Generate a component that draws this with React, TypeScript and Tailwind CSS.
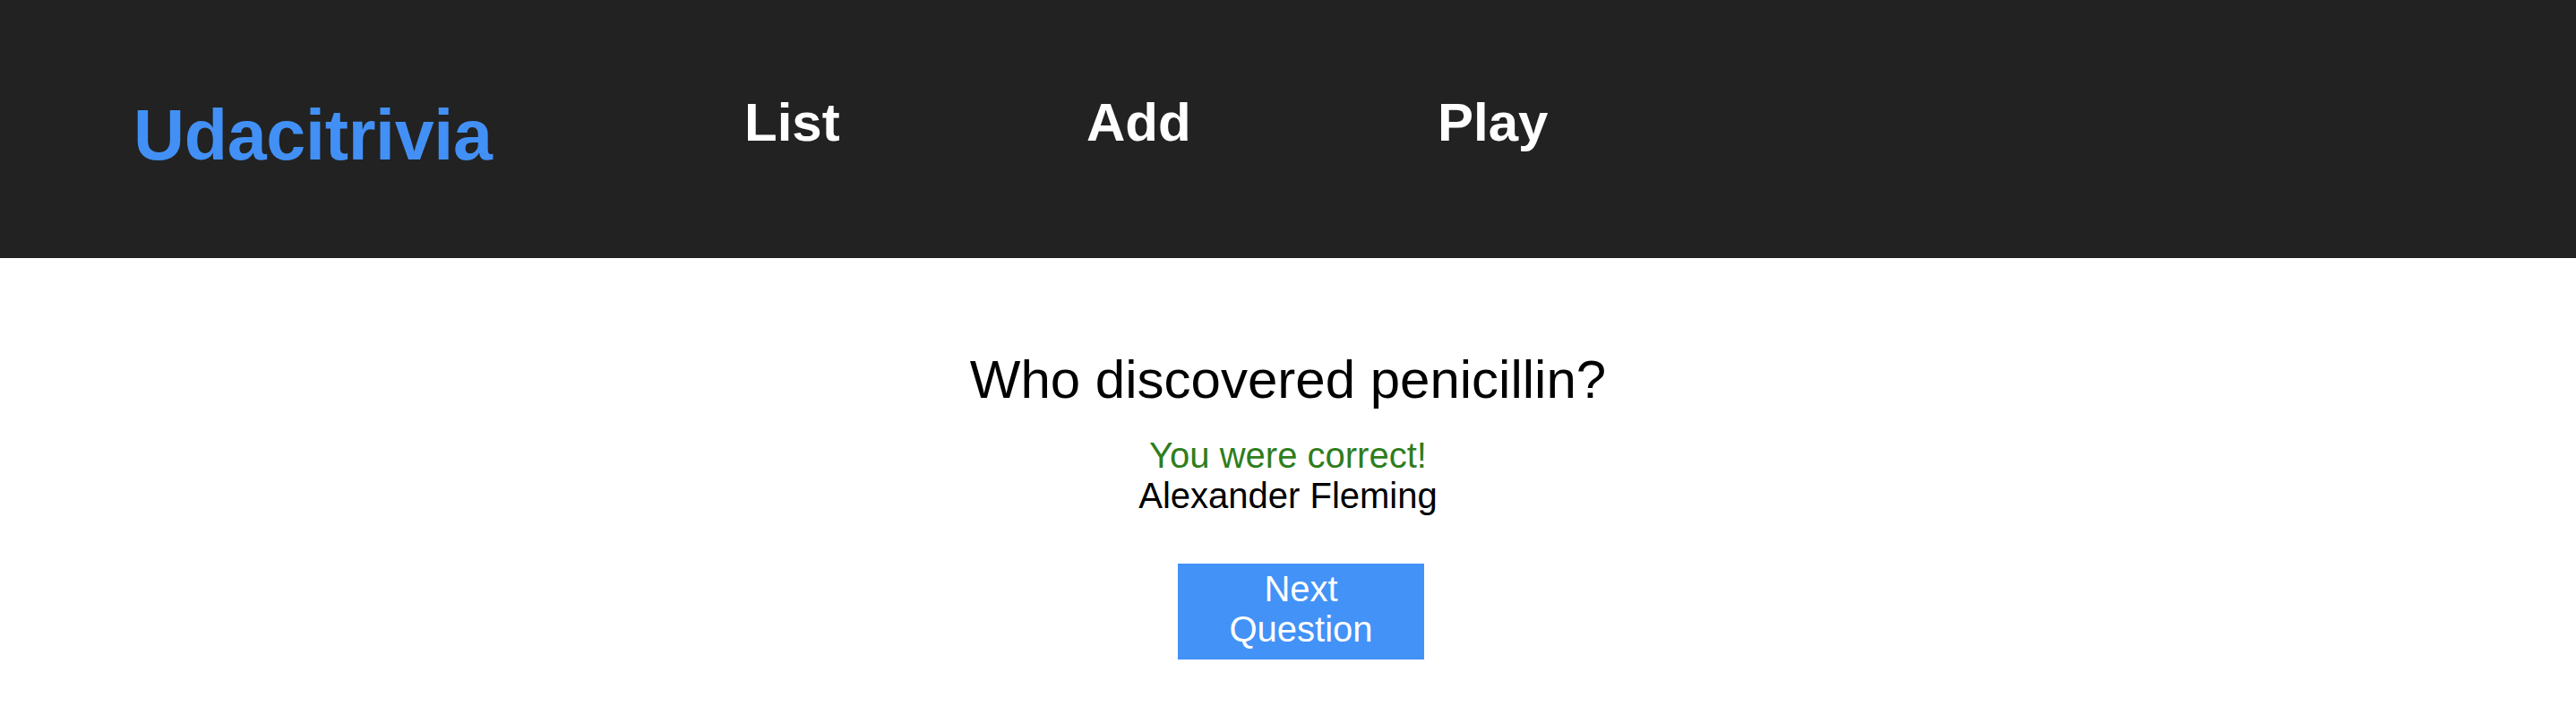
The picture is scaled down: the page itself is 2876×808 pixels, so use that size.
import React from "react";

export default function App() {
  return (
    <div className="min-h-screen bg-white" style={{ fontFamily: '"Liberation Sans", Arial, Helvetica, sans-serif' }}>
      <header className="flex h-[288px] items-start bg-[#222222]">
        <h1 className="ml-[149px] mt-[105px] w-[682px] shrink-0 text-[79px] font-bold leading-[normal] tracking-[-0.3px] text-[#4290f5]">
          Udacitrivia
        </h1>
        <nav className="mt-[102px] flex text-[60px] font-bold leading-[normal] text-white">
          <span className="w-[382px]">List</span>
          <span className="w-[392px]">Add</span>
          <span>Play</span>
        </nav>
      </header>
      <main className="flex flex-col items-center pt-[101px]">
        <h2 className="text-[60px] font-normal leading-[normal] text-black">Who discovered penicillin?</h2>
        <div className="mt-[28px] text-[40px] leading-[normal] text-[#2f7d1c]">You were correct!</div>
        <div className="text-[40px] leading-[normal] text-black">Alexander Fleming</div>
        <button className="ml-[29px] mt-[53px] h-[107px] w-[275px] bg-[#4392f7] px-[20px] pb-[10px] pt-[5px] text-[40px] leading-[normal] text-white">
          Next Question
        </button>
      </main>
    </div>
  );
}
